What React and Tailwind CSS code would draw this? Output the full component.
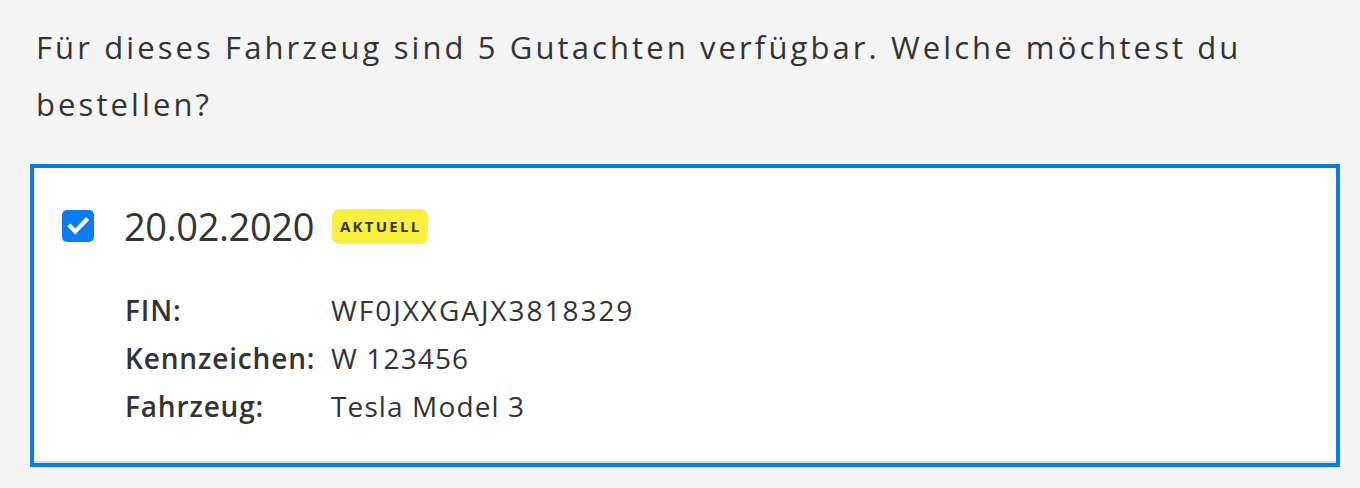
import React from "react";

export default function App() {
  return (
    <div className="min-h-[488px] w-[1360px] bg-[#f4f4f4] text-[#333333]" style={{ fontFamily: "'Open Sans', 'Noto Sans', sans-serif" }}>
      <div className="pt-[19px] pl-[36px]">
        <p className="w-[1260px] text-[31px] leading-[57px] tracking-[0.1em]">
          Für dieses Fahrzeug sind 5 Gutachten verfügbar. Welche möchtest du bestellen?
        </p>
      </div>
      <div className="ml-[30px] mt-[31px] w-[1310px] border-4 border-[#0a7be8] bg-white">
        <div className="border-b-2 border-[#dcdcdc] pl-[28px] pt-[40px] pb-[31px]">
          <div className="flex items-center h-[36px]">
            <div className="flex h-[32px] w-[32px] items-center justify-center rounded-[5px] bg-[#0a7bf5]">
              <svg width="26" height="26" viewBox="0 0 24 24" fill="none">
                <path d="M5 12.5l4.5 4.5L19.5 6.5" stroke="white" strokeWidth="4" strokeLinecap="square" strokeLinejoin="miter" />
              </svg>
            </div>
            <span className="ml-[30px] text-[38px] leading-none tracking-[-0.01em]">20.02.2020</span>
            <span className="ml-[18px] flex h-[35px] items-center rounded-[8px] bg-[#f8ef3e] pl-[8px] pr-[7px] text-[15px] font-bold tracking-[0.15em] text-[#333]">
              AKTUELL
            </span>
          </div>
          <div className="mt-[42px] ml-[63px] grid grid-cols-[206px_1fr] text-[28px] leading-[48px]">
            <span className="font-semibold tracking-[0.03em]">FIN:</span>
            <span className="tracking-[0.07em]">WF0JXXGAJX3818329</span>
            <span className="font-semibold tracking-[0.03em]">Kennzeichen:</span>
            <span className="tracking-[0.04em]">W 123456</span>
            <span className="font-semibold tracking-[0.03em]">Fahrzeug:</span>
            <span className="tracking-[0.04em]">Tesla Model 3</span>
          </div>
        </div>
      </div>
    </div>
  );
}
